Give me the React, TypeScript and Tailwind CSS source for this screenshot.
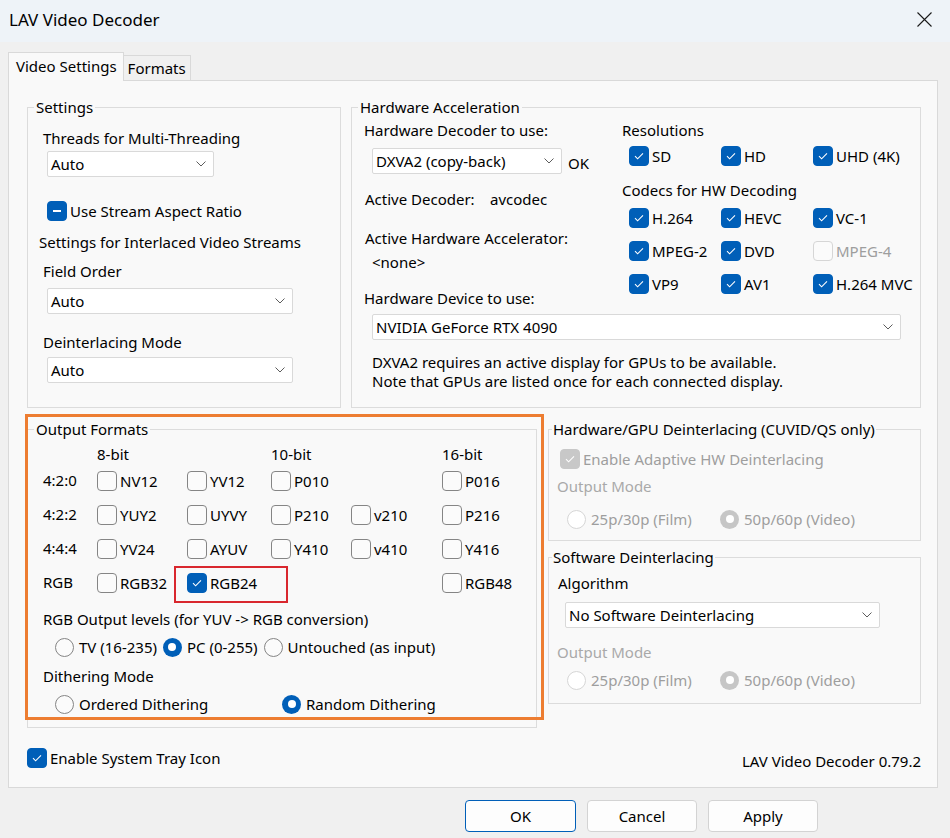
import React from 'react';

type CheckState = 'on' | 'off' | 'mixed';

function Chevron() {
  return (
    <svg width="10" height="6" viewBox="0 0 10 6" fill="none">
      <path d="M0.5 0.5 L5 5 L9.5 0.5" stroke="#5c5c5c" strokeWidth="1" />
    </svg>
  );
}

function Select({ value, className = '' }: { value: string; className?: string }) {
  return (
    <div className={`h-[26px] bg-white border border-[#d9d9d9] rounded-[2px] flex items-center justify-between pl-[3px] pr-[7px] ${className}`}>
      <span>{value}</span>
      <Chevron />
    </div>
  );
}

function Check({ label, state = 'off', disabled = false, className = '' }: { label: string; state?: CheckState; disabled?: boolean; className?: string }) {
  let box = 'bg-[#fbfbfb] border border-[#858585]';
  if (state !== 'off' && !disabled) box = 'bg-[#005fb8] border border-[#005fb8]';
  if (state !== 'off' && disabled) box = 'bg-[#c8c8c8] border border-[#c8c8c8]';
  if (state === 'off' && disabled) box = 'bg-[#fbfbfb] border border-[#d6d6d6]';
  return (
    <div className={`flex items-center h-[20px] ${className}`}>
      <div className={`w-[20px] h-[20px] rounded-[4px] flex items-center justify-center shrink-0 ${box}`}>
        {state === 'on' && (
          <svg width="12" height="10" viewBox="0 0 12 10" fill="none">
            <path d="M2 5.2 L4.6 7.8 L10 2.4" stroke="white" strokeWidth="1.1" />
          </svg>
        )}
        {state === 'mixed' && <div className="w-[8px] h-[1.5px] bg-white" />}
      </div>
      <span className={`ml-[3px] whitespace-nowrap ${disabled ? 'text-[#9e9e9e]' : ''}`}>{label}</span>
    </div>
  );
}

function Radio({ label, selected = false, disabled = false, className = '' }: { label: string; selected?: boolean; disabled?: boolean; className?: string }) {
  let circle = 'bg-[#fbfbfb] border border-[#858585]';
  if (selected && !disabled) circle = 'bg-[#005fb8]';
  if (selected && disabled) circle = 'bg-[#c6c6c6]';
  if (!selected && disabled) circle = 'bg-white border border-[#d6d6d6]';
  return (
    <div className={`flex items-center h-[20px] ${className}`}>
      <div className={`w-[19px] h-[19px] rounded-full flex items-center justify-center shrink-0 ${circle}`}>
        {selected && <div className="w-[8px] h-[8px] rounded-full bg-white" />}
      </div>
      <span className={`ml-[5px] whitespace-nowrap ${disabled ? 'text-[#9e9e9e]' : ''}`}>{label}</span>
    </div>
  );
}

const formatRows: { label: string; cells: (string | null)[] }[] = [
  { label: '4:2:0', cells: ['NV12', 'YV12', 'P010', null, 'P016'] },
  { label: '4:2:2', cells: ['YUY2', 'UYVY', 'P210', 'v210', 'P216'] },
  { label: '4:4:4', cells: ['YV24', 'AYUV', 'Y410', 'v410', 'Y416'] },
  { label: 'RGB', cells: ['RGB32', 'RGB24', null, null, 'RGB48'] },
];

export default function App() {
  return (
    <div className="w-[950px] h-[838px] bg-[#f0f0f0] text-black text-[15px] leading-[20px] font-['Noto_Sans',sans-serif] overflow-hidden">
      {/* title bar */}
      <div className="h-[42px] bg-[#eef3f8] flex items-center justify-between pl-[9px] pr-[18px]">
        <span className="text-[17px] mt-[-3px]">LAV Video Decoder</span>
        <svg width="15" height="15" viewBox="0 0 15 15" className="mt-[-4px]">
          <path d="M0.5 0.5 L14.5 14.5 M14.5 0.5 L0.5 14.5" stroke="#1a1a1a" strokeWidth="1.1" />
        </svg>
      </div>

      <div className="pt-[10px] pl-[8px] pr-[12px]">
        {/* tabs */}
        <div className="flex items-end h-[28px] relative z-10">
          <div className="h-[29px] mb-[-1px] pl-[7px] pr-[6px] bg-[#f9f9f9] border border-b-0 border-[#d9d9d9] flex items-start pt-[3px]">
            Video Settings
          </div>
          <div className="h-[25px] px-[4px] border border-l-0 border-b-0 border-[#d9d9d9] flex items-start pt-[2px]">
            Formats
          </div>
        </div>

        {/* tab page */}
        <div className="h-[708px] bg-[#f9f9f9] border border-[#d9d9d9] pt-[15px] pl-[18px] pr-[16px]">
          {/* first row */}
          <div className="flex gap-[10px]">
            <fieldset className="w-[314px] border border-[#dcdcdc]">
              <legend className="ml-[6px] px-[2px] leading-[22px]">Settings</legend>
              <div className="pl-[15px]">
                <div className="mt-[10px]">Threads for Multi-Threading</div>
                <Select value="Auto" className="mt-[3px] ml-[4px] w-[167px]" />
                <Check label="Use Stream Aspect Ratio" state="mixed" className="mt-[24px] ml-[4px]" />
                <div className="mt-[11px] ml-[-4px]">Settings for Interlaced Video Streams</div>
                <div className="mt-[9px]">Field Order</div>
                <Select value="Auto" className="mt-[7px] ml-[4px] w-[246px]" />
                <div className="mt-[18px]">Deinterlacing Mode</div>
                <Select value="Auto" className="mt-[5px] ml-[4px] w-[246px]" />
              </div>
            </fieldset>

            <fieldset className="w-[570px] border border-[#dcdcdc]">
              <legend className="ml-[6px] px-[2px] leading-[22px]">Hardware Acceleration</legend>
              <div className="pl-[12px] pb-[16px]">
                <div className="flex">
                  <div className="w-[258px]">
                    <div className="mt-[2px]">Hardware Decoder to use:</div>
                    <div className="mt-[8px] flex items-center pl-[8px]">
                      <Select value="DXVA2 (copy-back)" className="w-[190px]" />
                      <span className="ml-[6px] mt-[4px]">OK</span>
                    </div>
                    <div className="mt-[15px] pl-[1px] flex">
                      <span className="w-[125px]">Active Decoder:</span>
                      <span>avcodec</span>
                    </div>
                    <div className="mt-[19px] pl-[1px]">Active Hardware Accelerator:</div>
                    <div className="mt-[4px] pl-[8px]">&lt;none&gt;</div>
                    <div className="mt-[16px]">Hardware Device to use:</div>
                  </div>
                  <div>
                    <div className="mt-[2px]">Resolutions</div>
                    <div className="mt-[6px] pl-[7px] grid grid-cols-[92px_92px_auto]">
                      <Check label="SD" state="on" />
                      <Check label="HD" state="on" />
                      <Check label="UHD (4K)" state="on" />
                    </div>
                    <div className="mt-[14px]">Codecs for HW Decoding</div>
                    <div className="mt-[8px] pl-[7px] grid grid-cols-[92px_92px_auto] gap-y-[13px]">
                      <Check label="H.264" state="on" />
                      <Check label="HEVC" state="on" />
                      <Check label="VC-1" state="on" />
                      <Check label="MPEG-2" state="on" />
                      <Check label="DVD" state="on" />
                      <Check label="MPEG-4" disabled />
                      <Check label="VP9" state="on" />
                      <Check label="AV1" state="on" />
                      <Check label="H.264 MVC" state="on" />
                    </div>
                  </div>
                </div>
                <Select value="NVIDIA GeForce RTX 4090" className="mt-[6px] ml-[8px] w-[529px]" />
                <div className="mt-[13px] ml-[8px] leading-[19px]">
                  <div>DXVA2 requires an active display for GPUs to be available.</div>
                  <div>Note that GPUs are listed once for each connected display.</div>
                </div>
              </div>
            </fieldset>
          </div>

          {/* second row */}
          <div className="flex gap-[11px] mt-[10px] items-start">
            <div className="relative">
              <fieldset className="w-[510px] border border-[#dcdcdc]">
                <legend className="ml-[6px] px-[2px] leading-[22px]">Output Formats</legend>
                <div className="pl-[15px] pb-[13px]">
                  <div className="mt-[4px] grid grid-cols-[54px_174px_171px_auto] h-[20px]">
                    <span />
                    <span>8-bit</span>
                    <span>10-bit</span>
                    <span>16-bit</span>
                  </div>
                  {formatRows.map(row => (
                    <div key={row.label} className="grid grid-cols-[54px_90px_84px_80px_91px_auto] h-[34px] items-center">
                      <span className="mt-[-2px]">{row.label}</span>
                      {row.cells.map((cell, i) =>
                        cell === null ? (
                          <span key={i} />
                        ) : cell === 'RGB24' ? (
                          <div key={i} className="relative">
                            <Check label={cell} state="on" />
                            <div className="absolute left-[-13px] top-[-7px] w-[114px] h-[37px] border-2 border-[#d9272e]" />
                          </div>
                        ) : (
                          <Check key={i} label={cell} />
                        )
                      )}
                    </div>
                  ))}
                  <div className="mt-[9px]">RGB Output levels (for YUV -&gt; RGB conversion)</div>
                  <div className="mt-[8px] ml-[12px] flex gap-[6px]">
                    <Radio label="TV (16-235)" />
                    <Radio label="PC (0-255)" selected />
                    <Radio label="Untouched (as input)" />
                  </div>
                  <div className="mt-[9px]">Dithering Mode</div>
                  <div className="mt-[8px] ml-[12px] flex">
                    <Radio label="Ordered Dithering" className="w-[227px]" />
                    <Radio label="Random Dithering" selected />
                  </div>
                </div>
              </fieldset>
              <div className="absolute left-[-2px] top-[-4px] w-[519px] h-[306px] border-[3px] border-[#ed7d31] pointer-events-none" />
            </div>

            <div className="w-[373px]">
              <fieldset className="border border-[#dcdcdc]">
                <legend className="ml-[3px] px-[1px] leading-[22px]">Hardware/GPU Deinterlacing (CUVID/QS only)</legend>
                <div className="pb-[11px]">
                  <Check label="Enable Adaptive HW Deinterlacing" state="on" disabled className="mt-[9px] ml-[11px]" />
                  <div className="mt-[7px] ml-[8px] text-[#a9a9a9]">Output Mode</div>
                  <div className="mt-[13px] ml-[18px] flex">
                    <Radio label="25p/30p (Film)" disabled className="w-[153px]" />
                    <Radio label="50p/60p (Video)" selected disabled />
                  </div>
                </div>
              </fieldset>
              <fieldset className="mt-[5px] border border-[#dcdcdc]">
                <legend className="ml-[3px] px-[1px] leading-[22px]">Software Deinterlacing</legend>
                <div className="pb-[13px]">
                  <div className="mt-[5px] ml-[9px]">Algorithm</div>
                  <Select value="No Software Deinterlacing" className="mt-[9px] ml-[16px] w-[315px]" />
                  <div className="mt-[14px] ml-[8px] text-[#a9a9a9]">Output Mode</div>
                  <div className="mt-[8px] ml-[18px] flex">
                    <Radio label="25p/30p (Film)" disabled className="w-[153px]" />
                    <Radio label="50p/60p (Video)" selected disabled />
                  </div>
                </div>
              </fieldset>
            </div>
          </div>

          {/* tray row */}
          <div className="mt-[17px] flex items-center justify-between">
            <Check label="Enable System Tray Icon" state="on" />
            <span className="mt-[6px]">LAV Video Decoder 0.79.2</span>
          </div>
        </div>
      </div>

      {/* buttons */}
      <div className="mt-[12px] flex justify-end gap-[11px] pr-[132px]">
        <button className="w-[111px] h-[32px] bg-[#fdfdfd] border border-[#005fb8] rounded-[4px] text-[15px]">OK</button>
        <button className="w-[110px] h-[32px] bg-[#fdfdfd] border border-[#d3d3d3] rounded-[4px] text-[15px]">Cancel</button>
        <button className="w-[110px] h-[32px] bg-[#fdfdfd] border border-[#d3d3d3] rounded-[4px] text-[15px]">Apply</button>
      </div>
    </div>
  );
}
